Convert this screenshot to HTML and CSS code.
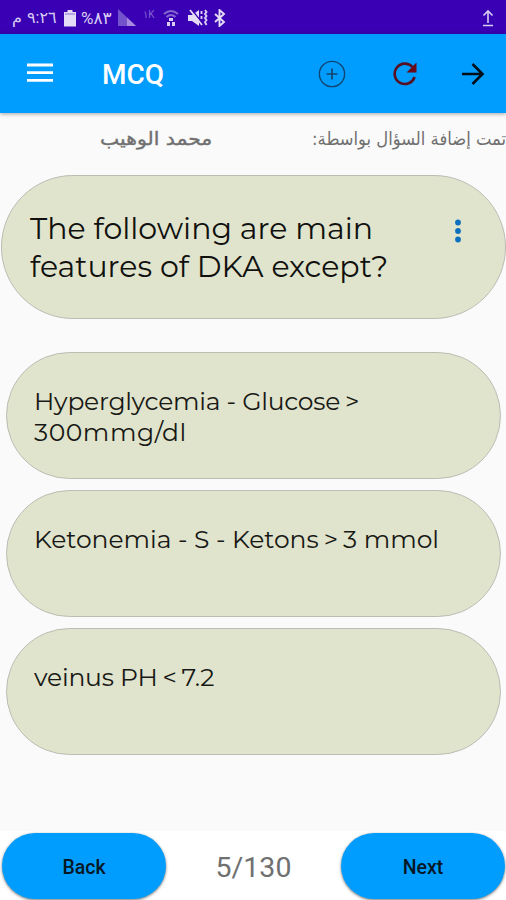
FILE: index.html
```
<!DOCTYPE html>
<html lang="en">
<head>
<meta charset="utf-8">
<title>MCQ</title>
<link rel="stylesheet" href="styles.css">
</head>
<body>
<div class="screen">
  <div class="status">
    <span class="meridiem">م</span>
    <span class="clock">٩:٢٦</span>
    <svg class="battery" width="12" height="18" viewBox="0 0 12 18"><path d="M3.500 1h5v2H12v14.500H0V3h3.500z" fill="#e4dcf6"/><path d="M1 5h10" stroke="#8b70d2"/></svg>
    <span class="percent">%٨٣</span>
    <svg class="signal" width="18" height="18" viewBox="0 0 18 18"><path d="M0 0 18 17H0z" fill="#7452cc"/><path d="M9 17V8.500L18 17z" fill="#a68be1"/></svg>
    <span class="network">١K</span>
    <svg class="wifi" width="16" height="18" viewBox="0 0 16 18" fill="none"><path d="M1 5q7-6 14 0M3.500 8q4.500-4 9 0" stroke="#8468d1" stroke-width="2"/><path d="M6 9h4v3H6zM4 13h3v4H4zM9 13h3v4H9z" fill="#d8cdf2"/></svg>
    <svg class="mute" width="20" height="18" viewBox="0 0 20 18" fill="none"><path d="M0 6h4l7-5v16l-7-5H0z" fill="#e4dcf6"/><path d="M4 1l11 14" stroke="#3a00b3" stroke-width="1.500"/><path d="M2 1l12 15" stroke="#e4dcf6" stroke-width="1.800"/><path d="M13.500 2v3M13.500 7v3M17 1l1.500 2-1.500 2 1.500 2-1.500 2 1.500 2-1.500 2 1.500 3" stroke="#d8cdf2" stroke-width="1.900"/></svg>
    <svg class="bluetooth" width="12" height="18" viewBox="0 0 12 18" fill="none"><path d="M1 5l9 8-4.500 4V1L10 5l-9 8" stroke="#e4dcf6" stroke-width="1.900"/></svg>
    <svg class="upload" width="14" height="18" viewBox="0 0 14 18" fill="none"><path d="M7 14V2M2.500 6.500 7 2l4.500 4.500M2 16.500h10" stroke="#d8cdf2" stroke-width="1.600"/></svg>
  </div>
  <header class="appbar">
    <svg class="menu" width="26" height="20" viewBox="0 0 26 20"><path d="M0 2h26M0 9.700h26M0 17.400h26" stroke="#fff" stroke-width="2.800"/></svg>
    <h1 class="title">MCQ</h1>
    <svg class="add" width="28" height="28" viewBox="0 0 28 28" fill="none" stroke="#12466e"><circle cx="14" cy="14" r="12.600" stroke-width="1.400"/><path d="M14 8.500v11M8.500 14h11" stroke-width="1.700"/></svg>
    <svg class="refresh" width="26" height="26" viewBox="0 0 26 26" fill="none"><path d="M22.600 16A10.200 10.200 0 1 1 20.500 6" stroke="#571020" stroke-width="2.600"/><path d="M24.500 1.500V11.500h-10z" fill="#690b18"/></svg>
    <svg class="forward" width="24" height="24" viewBox="0 0 24 24" fill="none"><path d="M1 12h21M11.500 2l10 10-10 10" stroke="#03101a" stroke-width="2.600"/></svg>
  </header>
  <div class="author" dir="rtl">
    <span class="label">تمت إضافة السؤال بواسطة:</span>
    <span class="name">محمد الوهيب</span>
  </div>
  <section class="question">
    <p class="prompt">The following are main<br>features of DKA except?</p>
    <svg class="more" width="8" height="24" viewBox="0 0 8 24" fill="#0b70bd"><circle cx="4" cy="3.500" r="2.900"/><circle cx="4" cy="12" r="2.900"/><circle cx="4" cy="20.500" r="2.900"/></svg>
  </section>
  <main class="options">
    <div class="option"><span class="glucose">Hyperglycemia - Glucose <span class="sign">&gt;</span></span><br><span class="amount">300mmg/dl</span></div>
    <div class="option"><span class="ketones">Ketonemia - S - Ketons <span class="sign">&gt;</span> 3 mmol</span></div>
    <div class="option"><span class="ph">veinus PH <span class="sign">&lt;</span> 7.2</span></div>
  </main>
  <footer class="pager">
    <button class="btn">Back</button>
    <span class="count">5/130</span>
    <button class="btn">Next</button>
  </footer>
</div>
</body>
</html>
```

FILE: styles.css
```
* { box-sizing: border-box; }
body { margin: 0; background: #fafafa; font-family: Roboto, "DejaVu Sans", sans-serif; }
svg { display: block; flex: none; }
.screen { width: 506px; height: 900px; display: flex; flex-direction: column; overflow: hidden; }

.status { height: 34px; flex: none; display: flex; align-items: center; background: #3a00b3; color: #d8cdf2; padding: 2px 11px 0 12px; font-size: 16px; line-height: 20px; white-space: nowrap; }
.meridiem { width: 15px; }
.clock { width: 31px; margin-right: 6px; }
.percent { width: 32px; margin: 0 5px 0 5px; font-size: 17px; }
.network { width: 14px; margin: -7px 6px 0 7px; font-size: 10px; color: #8565d3; }
.mute { margin-left: 9px; }
.bluetooth { margin-left: 6px; }
.upload { margin-left: auto; }

.appbar { height: 79px; flex: none; display: flex; align-items: center; background: #009dff; padding: 0 21px 0 27px; box-shadow: 0 1px 4px rgba(0,0,0,.35); }
.menu { margin-top: -2px; }
.title { margin: 3px auto 0 49px; color: #fff; font-size: 28px; line-height: 32px; font-weight: 500; }
.refresh { margin-left: 46px; }
.forward { margin-left: 43px; }

.author { height: 62px; flex: none; display: flex; padding-top: 13px; color: #707070; font-family: "DejaVu Sans", sans-serif; font-size: 18px; line-height: 26px; white-space: nowrap; }
.label { width: 194px; transform: scaleX(.91); transform-origin: right; }
.name { margin-right: 100px; transform: scaleX(1.13); transform-origin: right; -webkit-text-stroke: .4px #707070; }

.question { height: 144px; flex: none; margin: 0 0 0 1px; display: flex; justify-content: space-between; background: #e1e4cc; border: 1px solid #bbbdb5; border-radius: 72px; padding: 34px 43px 0 28px; }
.prompt { margin: 0; color: #10110f; font-family: Montserrat, Inter, sans-serif; font-size: 30px; line-height: 38px; white-space: nowrap; }
.more { margin-top: 9px; }

.options { flex: 1; display: flex; flex-direction: column; gap: 11px; padding: 33px 5px 0 6px; }
.option { height: 127px; flex: none; background: #e1e4cc; border: 1px solid #bbbdb5; border-radius: 64px; padding: 33px 27px 0; color: #181916; font-family: Montserrat, Inter, sans-serif; font-size: 25px; line-height: 31px; white-space: nowrap; }
.sign { margin: 0 -1.500px; }
.glucose { letter-spacing: -.25px; }
.amount { letter-spacing: .55px; }
.ketones { letter-spacing: -.02px; }
.ph { letter-spacing: -.2px; }

.pager { height: 69px; flex: none; display: flex; align-items: flex-start; justify-content: space-between; background: #fff; padding: 2px 1px 0 2px; }
.btn { width: 164px; height: 66px; border: 0; border-radius: 33px; background: #009dff; box-shadow: 0 1px 3px rgba(0,0,0,.55); color: #071725; font: 500 19.500px/24px Roboto, sans-serif; padding: 3px 0 0; }
.count { padding-top: 18px; color: #707070; font-size: 28.500px; line-height: 34px; }
```
